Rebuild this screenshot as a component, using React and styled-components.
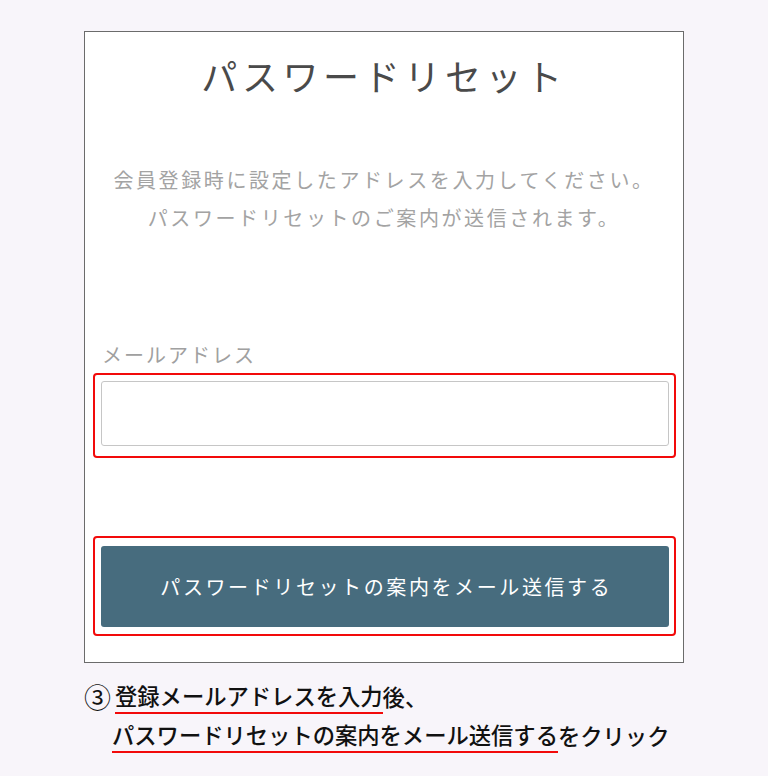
import React from "react";
import styled, { createGlobalStyle } from "styled-components";

const GlobalStyle = createGlobalStyle`
  html, body {
    margin: 0;
    padding: 0;
    background: #f8f5fa;
  }
  body {
    font-family: "Noto Sans CJK JP", "Noto Sans", sans-serif;
  }
  * {
    box-sizing: border-box;
  }
`;

const Page = styled.main`
  width: 768px;
  height: 776px;
  padding: 31px 0 0 84px;
  background: #f8f5fa;
`;

const Card = styled.section`
  display: flex;
  flex-direction: column;
  width: 600px;
  height: 632px;
  border: 1px solid #6b6b6b;
  background: #fff;
`;

const Title = styled.h1`
  margin: 20px 0 0;
  font-size: 36px;
  font-weight: 400;
  line-height: 46px;
  letter-spacing: 4.6px;
  color: #4a4a4a;
  text-align: center;
`;

const Lead = styled.p`
  margin: 63px 0 0;
  font-size: 20px;
  line-height: 38px;
  letter-spacing: 2.6px;
  color: #a3a3a3;
  text-align: center;
`;

const Label = styled.label`
  display: block;
  margin: 104px 0 0 17px;
  font-size: 20px;
  line-height: 28px;
  letter-spacing: 2px;
  color: #a0a0a0;
`;

const Mark = styled.div`
  margin: ${(p) => p.$top}px 7px 0 8px;
  padding: ${(p) => p.$pad};
  border: 2px solid #f20a0a;
  border-radius: 4px;
`;

const Input = styled.input`
  display: block;
  width: 100%;
  height: 65px;
  border: 1px solid #c6c6c6;
  border-radius: 3px;
  background: #fff;
  outline: none;
`;

const Button = styled.button`
  display: block;
  width: 100%;
  height: 81px;
  border: none;
  border-radius: 3px;
  padding: 0 0 0 2.6px;
  background: #476c7e;
  color: #fff;
  font-family: "Noto Sans CJK JP", "Noto Sans", sans-serif;
  font-size: 20px;
  letter-spacing: 2.6px;
  cursor: pointer;
`;

const Caption = styled.div`
  margin-top: 14px;
  font-size: 22.3px;
  font-weight: 500;
  line-height: 39px;
  color: #111;
`;

const Line = styled.div`
  display: flex;
  align-items: center;
  padding-left: ${(p) => p.$indent || 0}px;
  white-space: nowrap;
`;

const Num = styled.span`
  font-size: 27px;
  font-weight: 400;
  margin: 0 4px 0 0;
  line-height: 39px;
`;

const Under = styled.span`
  border-bottom: 2px solid #f20a0a;
  line-height: 1.45;
`;

export default function App() {
  return (
    <>
      <GlobalStyle />
      <Page>
        <Card>
          <Title>パスワードリセット</Title>
          <Lead>
            会員登録時に設定したアドレスを入力してください。
            <br />
            パスワードリセットのご案内が送信されます。
          </Lead>
          <Label htmlFor="mail">メールアドレス</Label>
          <Mark $top={4} $pad="6px 5px 10px 6px">
            <Input id="mail" type="email" />
          </Mark>
          <Mark $top={78} $pad="8px 5px 7px 6px">
            <Button>パスワードリセットの案内をメール送信する</Button>
          </Mark>
        </Card>
        <Caption>
          <Line>
            <Num>③</Num>
            <Under>登録メールアドレスを入力</Under>後、
          </Line>
          <Line $indent={28}>
            <Under>パスワードリセットの案内をメール送信する</Under>をクリック
          </Line>
        </Caption>
      </Page>
    </>
  );
}
